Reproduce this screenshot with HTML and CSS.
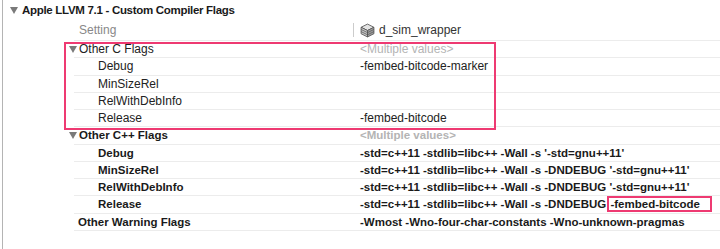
FILE: index.html
```html
<!DOCTYPE html>
<html lang="en">
<head>
    <meta charset="UTF-8">
    <title>Custom Compiler Flags</title>
    <link rel="stylesheet" href="styles.css">
</head>
<body>
<div class="pane">
    <div class="title"><span class="tri"></span><span>Apple LLVM 7.1 - Custom Compiler Flags</span></div>

    <div class="colhead">
        <div class="setting">Setting</div>
        <div class="sep"></div>
        <svg class="target-icon" width="15" height="15" viewBox="0 0 14 14">
            <path d="M1 4 L7 1 L13 4 L7 7 Z" fill="#e4e4e4" stroke="#555" stroke-width="0.8"/>
            <path d="M1 4 L1 10 L7 13 L7 7 Z" fill="#c8c8c8" stroke="#555" stroke-width="0.8"/>
            <path d="M13 4 L13 10 L7 13 L7 7 Z" fill="#a0a0a0" stroke="#555" stroke-width="0.8"/>
            <path d="M1 6 L7 9 L13 6 M1 8 L7 11 L13 8" fill="none" stroke="#555" stroke-width="0.7"/>
        </svg>
        <div class="target">d_sim_wrapper</div>
    </div>

    <div class="rows">
        <div class="group">
            <div class="row"><div class="name head"><span class="tri"></span>Other C Flags</div><div class="val multi">&lt;Multiple values&gt;</div></div>
            <div class="row"><div class="name sub">Debug</div><div class="val">-fembed-bitcode-marker</div></div>
            <div class="row"><div class="name sub">MinSizeRel</div><div class="val"></div></div>
            <div class="row"><div class="name sub">RelWithDebInfo</div><div class="val"></div></div>
            <div class="row"><div class="name sub">Release</div><div class="val">-fembed-bitcode</div></div>
            <div class="mark"></div>
        </div>

        <div class="group set">
            <div class="row"><div class="name head"><span class="tri"></span>Other C++ Flags</div><div class="val multi">&lt;Multiple values&gt;</div></div>
            <div class="row"><div class="name sub">Debug</div><div class="val">-std=c++11 -stdlib=libc++ -Wall -s '-std=gnu++11'</div></div>
            <div class="row"><div class="name sub">MinSizeRel</div><div class="val">-std=c++11 -stdlib=libc++ -Wall -s -DNDEBUG '-std=gnu++11'</div></div>
            <div class="row"><div class="name sub">RelWithDebInfo</div><div class="val">-std=c++11 -stdlib=libc++ -Wall -s -DNDEBUG '-std=gnu++11'</div></div>
            <div class="row"><div class="name sub">Release</div><div class="val">-std=c++11 -stdlib=libc++ -Wall -s -DNDEBUG <span class="mark-inline">-fembed-bitcode</span></div></div>
        </div>

        <div class="group set">
            <div class="row"><div class="name">Other Warning Flags</div><div class="val">-Wmost -Wno-four-char-constants -Wno-unknown-pragmas</div></div>
        </div>
    </div>
</div>
</body>
</html>
```

FILE: styles.css
```css
body{
    margin: 0;
    background: #fff;
    font-family: "Liberation Sans", Arial, sans-serif;
    font-size: 12px;
    color: #222;
}

.pane{
    margin-left: 2px;
    height: 249px;
    border-left: 1px solid #b4b4b4;
}

.title{
    height: 20px;
    display: flex;
    align-items: center;
    padding-left: 7px;
    font-weight: bold;
    font-size: 11.5px;
    letter-spacing: -0.3px;
    color: #1a1a1a;
}
.tri{
    display: inline-block;
    width: 0;
    height: 0;
    border-left: 4px solid transparent;
    border-right: 4px solid transparent;
    border-top: 7px solid #7a7a7a;
    margin-right: 4px;
}

.colhead{
    height: 20px;
    display: flex;
    align-items: center;
    padding-left: 76px;
    color: #888;
}
.setting{
    width: 274px;
}
.sep{
    width: 1px;
    height: 14px;
    background: #ccc;
    margin-right: 6px;
}
.target-icon{
    margin-right: 4px;
}
.target{
    color: #333;
}

.rows{
    margin-left: 71px;
    border-top: 1px solid #ececec;
}
.group{
    position: relative;
}
.row{
    box-sizing: border-box;
    height: 17.25px;
    display: flex;
    align-items: center;
    border-bottom: 1px solid #ececec;
    white-space: nowrap;
}
.name{
    width: 286px;
    padding-left: 4px;
    box-sizing: border-box;
    display: flex;
    align-items: center;
}
.name.head .tri{
    margin-left: -9px;
    margin-right: 2px;
}
.name.sub{
    padding-left: 24px;
}
.val.multi{
    color: #b4b4b4;
}
.group.set{
    font-weight: bold;
    font-size: 11.5px;
    color: #1a1a1a;
}
.group.set .val.multi{
    color: #b4b4b4;
}

.mark{
    position: absolute;
    left: -10px;
    top: 1px;
    width: 432px;
    height: 88px;
    box-sizing: border-box;
    border: 2px solid #ee3a72;
}
.mark-inline{
    border: 2px solid #ee3a72;
    padding: 0 10px 0 1px;
    margin-left: -2px;
}
```
